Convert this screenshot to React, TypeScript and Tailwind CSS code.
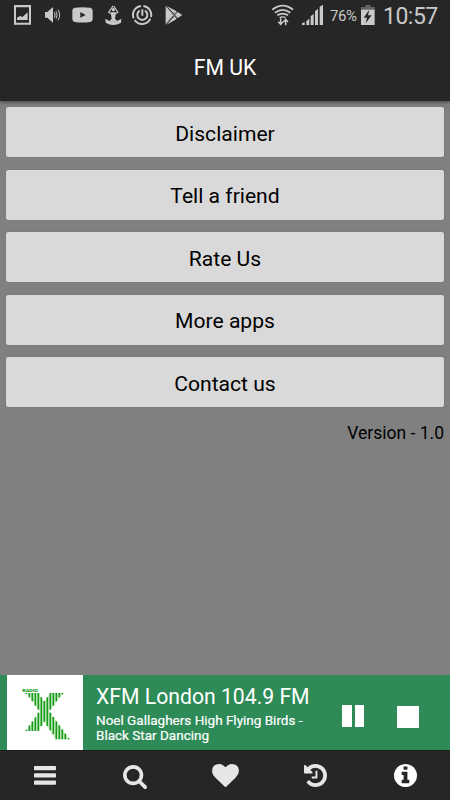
import type { ReactNode } from "react";

interface NavItem {
  label: string;
  viewBox: string;
  className: string;
  shape: ReactNode;
}

const MENU_ITEMS = ["Disclaimer", "Tell a friend", "Rate Us", "More apps", "Contact us"];

const NAV_ITEMS: NavItem[] = [
  {
    label: "Menu",
    viewBox: "0 0 22 19",
    className: "h-[19px] w-[22px] text-[#e6e6e6]",
    shape: (
      <>
        <rect width="22" height="4.2" rx="0.8" />
        <rect y="7.3" width="22" height="4.2" rx="0.8" />
        <rect y="14.6" width="22" height="4.2" rx="0.8" />
      </>
    ),
  },
  {
    label: "Search",
    viewBox: "64 128 1664 1664",
    className: "mt-[2px] size-[24px] text-[#e6e6e6]",
    shape: (
      <path d="M1216 832q0-185-131.5-316.5t-316.5-131.5-316.5 131.5-131.5 316.5 131.5 316.5 316.5 131.5 316.5-131.5 131.5-316.5zm512 832q0 52-38 90t-90 38q-54 0-90-38l-343-342q-179 124-399 124-143 0-273.5-55.5t-225-150-150-225-55.5-273.5 55.5-273.5 150-225 225-150 273.5-55.5 273.5 55.5 225 150 150 225 55.5 273.5q0 220-124 399l343 343q37 37 37 90z" />
    ),
  },
  {
    label: "Favourites",
    viewBox: "0 128 1792 1536",
    className: "h-[23px] w-[27px] text-[#e6e6e6]",
    shape: (
      <path d="M896 1664q-26 0-44-18l-624-602q-10-8-27.5-26t-55.5-65.5-68-97.5-53.5-121-23.5-138q0-220 127-344t351-124q62 0 126.5 21.5t120 58 95.5 68.5 76 68q36-36 76-68t95.5-68.5 120-58 126.5-21.5q224 0 351 124t127 344q0 221-229 450l-623 600q-18 18-44 18z" />
    ),
  },
  {
    label: "History",
    viewBox: "128 128 1536 1536",
    className: "size-[23px] text-[#e6e6e6]",
    shape: (
      <path d="M1664 896q0 156-61 298t-164 245-245 164-298 61q-172 0-327-72.5t-264-204.5q-7-10-6.5-22.5t8.5-20.5l137-138q10-9 25-9 16 2 23 12 73 95 179 147t225 52q104 0 198.5-40.5t163.5-109.5 109.5-163.5 40.5-198.5-40.5-198.5-109.5-163.5-163.5-109.5-198.5-40.5q-98 0-188 35.5t-160 101.5l137 138q31 30 14 69-17 40-59 40h-448q-26 0-45-19t-19-45v-448q0-42 40-59 39-17 69 14l130 129q107-101 244.5-156.5t284.5-55.5q156 0 298 61t245 164 164 245 61 298zm-640-288v448q0 14-9 23t-23 9h-320q-14 0-23-9t-9-23v-64q0-14 9-23t23-9h224v-352q0-14 9-23t23-9h64q14 0 23 9t9 23z" />
    ),
  },
  {
    label: "Info",
    viewBox: "128 128 1536 1536",
    className: "size-[23px] text-white",
    shape: (
      <path d="M1152 1376v-160q0-14-9-23t-23-9h-96v-512q0-14-9-23t-23-9h-320q-14 0-23 9t-9 23v160q0 14 9 23t23 9h96v320h-96q-14 0-23 9t-9 23v160q0 14 9 23t23 9h448q14 0 23-9t9-23zm-128-896v-160q0-14-9-23t-23-9h-192q-14 0-23 9t-9 23v160q0 14 9 23t23 9h192q14 0 23-9t9-23zm640 416q0 209-103 385.5t-279.5 279.5-385.5 103-385.5-103-279.5-279.5-103-385.5 103-385.5 279.5-279.5 385.5-103 385.5 103 279.5 279.5 103 385.5z" />
    ),
  },
];

// [x, top, bottom] of every stripe in the station logo
const LOGO_STRIPES = [
  [79, 84, 87],
  [79, 194, 198],
  [88, 84, 97],
  [88, 181, 198],
  [97, 84, 109],
  [97, 169, 198],
  [106, 84, 122],
  [106, 157, 198],
  [115, 84, 134],
  [115, 143, 198],
  [124, 97, 183],
  [133, 108, 170],
  [142, 97, 183],
  [151, 84, 134],
  [151, 143, 196],
  [160, 84, 122],
  [160, 156, 207],
  [169, 84, 109],
  [169, 169, 223],
  [178, 84, 97],
  [178, 181, 223],
  [187, 84, 88],
  [187, 193, 223],
  [196, 206, 223],
  [206, 219, 223],
];

function StatusBar() {
  return (
    <div className="flex h-[34px] justify-between bg-[#262626] text-[#c9c9c9]">
      <div className="flex pl-[14px]">
        <svg className="h-[34px] w-[17px]" viewBox="42 0 51 102" fill="currentColor">
          <path fillRule="evenodd" d="M42 15h51v59H42zM48 22v46h39V22z" />
          <path d="M51 60V53l9-5 7 3 16-14v23z" />
        </svg>
        <svg className="ml-[14px] h-[34px] w-[16px]" viewBox="135 0 48 102" fill="currentColor">
          <path d="M135 36h7l17-15v47l-17-15h-7z" />
          <path d="M163 37q5 8 0 16M168 34q7 11 0 22M174 29q10 16 0 32" fill="none" stroke="currentColor" strokeWidth="3" />
        </svg>
        <svg className="ml-[11px] h-[34px] w-[21px]" viewBox="216 0 63 102">
          <path d="M224 23q23-3 47 0 7 1 7 9v25q0 8-7 9-24 3-47 0-7-1-7-9V32q0-8 7-9z" fill="currentColor" />
          <path d="M241 36v17l16-8z" fill="#262626" />
        </svg>
        <svg className="ml-[12px] h-[34px] w-[17px]" viewBox="313 0 51 102" fill="currentColor">
          <circle cx="338" cy="29" r="5" />
          <path d="M337 18l-13 19 9 5M339 18l13 19-9 5" fill="none" stroke="currentColor" strokeWidth="3.5" />
          <path d="M330 37h16l-3 19 6 6-11 4-11-4 6-6z" />
          <path d="M314 56l11 6 13 3 13-3 11-6-1 12q-11 7-23 7t-23-7z" />
        </svg>
        <svg className="ml-[10px] h-[34px] w-[21px]" viewBox="396 0 63 102" fill="none" stroke="currentColor">
          <path d="M423 18a27 27 0 0 0-22 37M404 60a27 27 0 0 0 47-4M453 51a27 27 0 0 0-23-33" strokeWidth="6" />
          <path d="M419 32a15 15 0 1 0 16 0M427 28v19" strokeWidth="6" />
        </svg>
        <svg className="ml-[12px] h-[34px] w-[18px]" viewBox="493 0 54 102" fill="currentColor">
          <path d="M495 19v53l23-27zM498 18l23 24 7-8zM498 74l23-25 7 8zM531 36l-8 9 8 9 14-9z" />
          <path d="M495 19l33 36M495 73l33-37" stroke="currentColor" strokeWidth="1.5" />
        </svg>
      </div>
      <div className="flex pr-[13px]">
        <svg className="h-[34px] w-[22px]" viewBox="35 0 66 102" fill="none" stroke="currentColor" strokeWidth="5.5">
          <path d="M36 29q31-24 62 0M44 38q23-17 46 0M51 46q16-10 32 0" />
          <path d="M58 53q9-5 18 0" strokeWidth="4" />
          <path d="M61 55v17M54 65l7 8 7-8M76 76V59M69 66l7-8 7 8" strokeWidth="4.5" />
        </svg>
        <svg className="ml-[8px] h-[34px] w-[21px]" viewBox="124 0 63 102" fill="currentColor">
          <path d="M124 75v-5l8-4v9zM137 75V63l9-7v19zM150 75V49l9-8v34zM163 75V34l9-8v49zM177 75V20l10-6v61z" />
        </svg>
        <span className="ml-[7px] w-[28px] whitespace-nowrap pt-[5px] text-[15px] leading-[22px] tracking-[-0.4px]">
          76%
        </span>
        <svg className="ml-[3px] h-[34px] w-[14px]" viewBox="302 0 42 102">
          <path d="M315 15h16v6h12v9h-41v-9h13z" fill="#636363" />
          <path d="M302 29h41v46h-41z" fill="currentColor" />
          <path d="M327 29l-17 24h10l-4 17 18-24h-11z" fill="#262626" />
        </svg>
        <span className="ml-[8px] w-[54px] whitespace-nowrap pt-[3px] text-[23px] leading-[27px] tracking-[-0.5px]">
          10:57
        </span>
      </div>
    </div>
  );
}

function StationLogo() {
  return (
    <svg className="ml-[7px] h-[75px] w-[76px] bg-white" viewBox="21 30 228 225">
      <path
        d="M79 84h38l16 26 17-26h41l-43 55 60 84h-42l-33-52-17 27H79l41-59z"
        fill="#d3efd0"
      />
      {LOGO_STRIPES.map(([x, top, bottom]) => (
        <rect key={`${x}-${top}`} x={x - 2.5} y={top} width="5" height={bottom - top} fill="#169b16" />
      ))}
      <text
        x="67"
        y="80"
        textLength="47"
        lengthAdjust="spacingAndGlyphs"
        fontSize="13"
        fontWeight="900"
        fill="#169b16"
      >
        RADIO
      </text>
    </svg>
  );
}

function PlayerBar() {
  return (
    <div className="flex h-[75px] bg-[#2e8b57] text-white">
      <StationLogo />
      <div className="ml-[13px] w-[245px] pt-[8px]">
        <div className="text-[21.2px] leading-[28px]">XFM London 104.9 FM</div>
        <div className="mt-[2px] text-[13.5px] leading-[15px] [-webkit-text-stroke:0.2px_white]">
          Noel Gallaghers High Flying Birds -
          <br />
          Black Star Dancing
        </div>
      </div>
      <button aria-label="Pause" className="ml-px mt-[30px] flex h-[22px] gap-[3px]">
        <span className="h-full w-[10px] bg-white" />
        <span className="h-full w-[9px] bg-white" />
      </button>
      <button aria-label="Stop" className="ml-[33px] mt-[31px] size-[22px] bg-white" />
    </div>
  );
}

function BottomNav() {
  return (
    <nav className="grid h-[50px] grid-cols-5 border-t border-[#1c1c1c] bg-[#262626]">
      {NAV_ITEMS.map(({ label, viewBox, className, shape }) => (
        <button key={label} aria-label={label} className="flex items-center justify-center">
          <svg className={className} viewBox={viewBox} fill="currentColor">
            {shape}
          </svg>
        </button>
      ))}
    </nav>
  );
}

export default function App() {
  return (
    <div className="flex h-[800px] w-[450px] flex-col overflow-hidden bg-[#808080] font-['Roboto',sans-serif]">
      <header className="bg-[#262626] shadow-[0_1px_4px_rgba(0,0,0,0.5)]">
        <StatusBar />
        <h1 className="flex h-[67px] items-center justify-center text-[21.2px] text-white">FM UK</h1>
      </header>
      <main className="flex flex-1 flex-col gap-[12.5px] px-[6px] pt-[6.4px]">
        {MENU_ITEMS.map((item) => (
          <button
            key={item}
            className="h-[50px] rounded-[2px] bg-[#d9d9d9] pt-[2px] text-[21.1px] text-black shadow-[0_0_1px_rgba(0,0,0,0.4)]"
          >
            {item}
          </button>
        ))}
        <p className="text-right text-[17.5px] leading-[26px] text-black">Version - 1.0</p>
      </main>
      <PlayerBar />
      <BottomNav />
    </div>
  );
}
